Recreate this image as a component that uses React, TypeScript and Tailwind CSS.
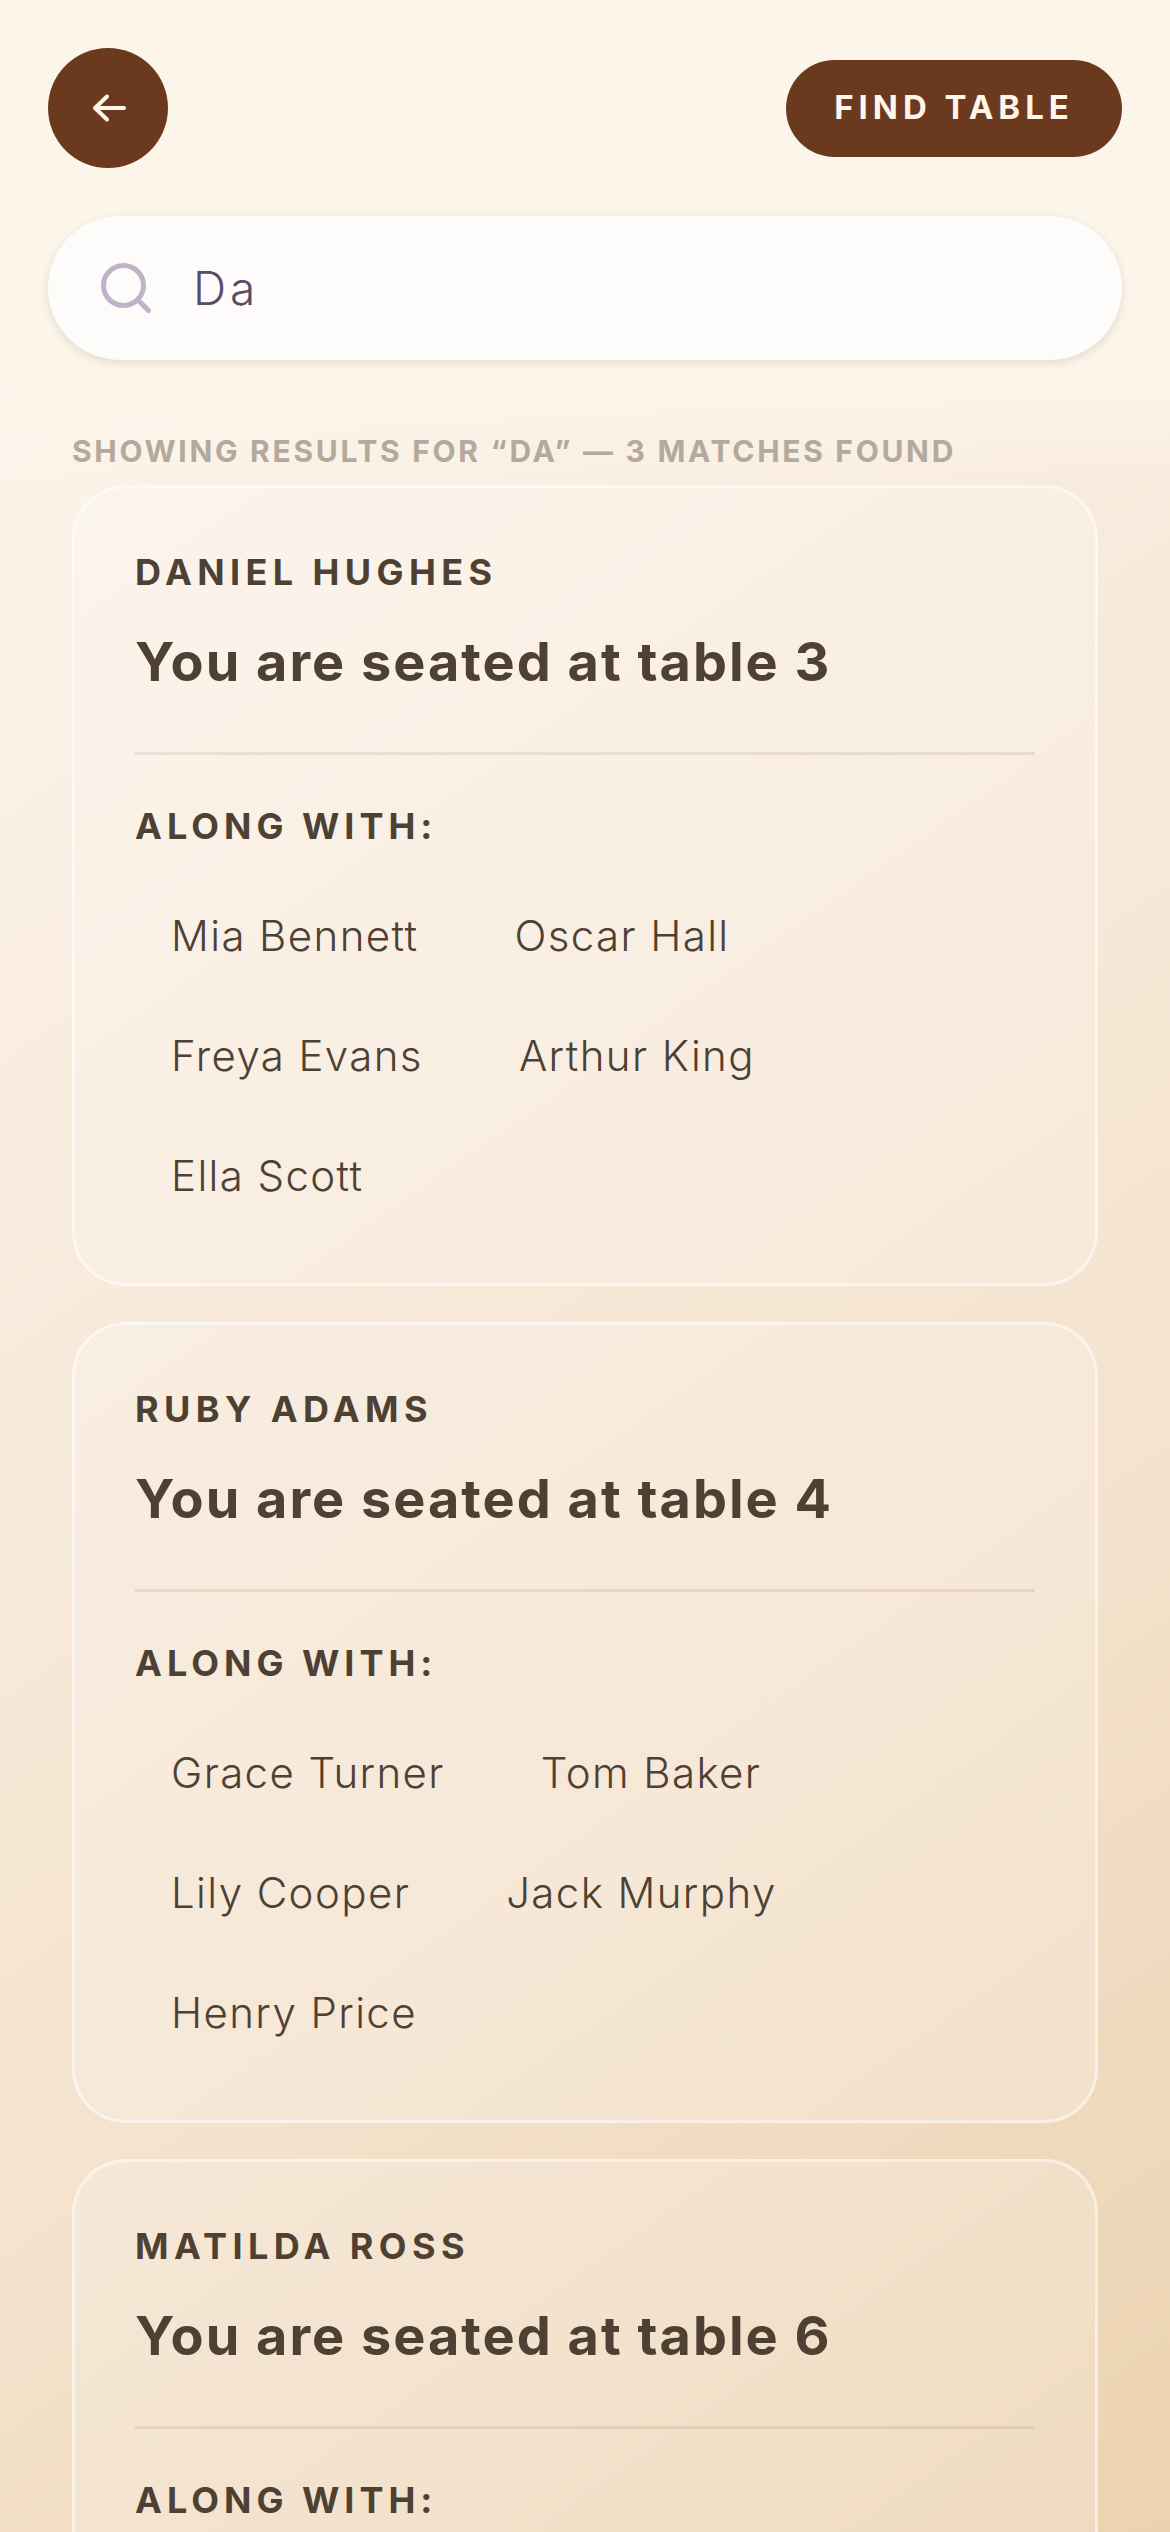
import React from 'react';
import { Search } from 'lucide-react';

interface Seat {
  name: string;
  table: number;
  guests: string[];
}

const seats: Seat[] = [
  { name: 'Daniel Hughes', table: 3, guests: ['Mia Bennett', 'Oscar Hall', 'Freya Evans', 'Arthur King', 'Ella Scott'] },
  { name: 'Ruby Adams', table: 4, guests: ['Grace Turner', 'Tom Baker', 'Lily Cooper', 'Jack Murphy', 'Henry Price'] },
  { name: 'Matilda Ross', table: 6, guests: [] },
];

const SeatCard = ({ seat }: { seat: Seat }) => (
  <div className="shrink-0 rounded-[54px] border-[3px] border-white/50 bg-white/20 px-[60px] py-[60px]">
    <p className="text-[36px] leading-[48px] font-bold uppercase tracking-[5.4px] text-[#4e4133]">{seat.name}</p>
    <h2 className="mt-[33px] text-[54px] leading-[66px] font-bold tracking-[2px] text-[#4e4133]">
      You are seated at table {seat.table}
    </h2>
    <div className="mt-[57px] h-[3px] bg-[#6b3a1e]/10" />
    <p className="mt-[47px] text-[36px] leading-[48px] font-bold uppercase tracking-[5px] text-[#4e4133]">Along with:</p>
    <div className="mt-[37px] flex flex-wrap gap-[24px]">
      {seat.guests.map((guest) => (
        <span key={guest} className="flex h-[96px] items-center px-[36px] text-[42px] font-light tracking-[1.4px] text-[#4e4133]">
          {guest}
        </span>
      ))}
    </div>
  </div>
);

export default function App() {
  return (
    <div className="h-[2532px] w-[1170px] overflow-hidden bg-[linear-gradient(145deg,#fdf8f0_0%,#f8ebdd_38%,#f4e2cd_68%,#ebd2b0_100%)] font-['Inter',sans-serif]">
      {/* Header */}
      <header className="bg-[linear-gradient(180deg,#fcf5ea_0%,#fcf5ea_78%,#fcf5ea00_100%)] px-[48px] pt-[48px] pb-[16px]">
        <div className="flex items-center justify-between">
          <button className="flex h-[120px] w-[120px] items-center justify-center rounded-full bg-[#6b3a1e]">
            <svg width="54" height="54" viewBox="0 0 54 54" fill="none" stroke="#fff5e8" strokeWidth="4" strokeLinecap="round" strokeLinejoin="round">
              <path d="M14.5 27H43" />
              <path d="M26 15.5 14 27l12 11.5" />
            </svg>
          </button>
          <button className="flex h-[97px] w-[336px] items-center justify-center rounded-full bg-[#6b3a1e] text-[33px] font-bold uppercase tracking-[5px] text-[#fff5e8]">
            Find table
          </button>
        </div>
        <div className="mt-[48px] flex h-[144px] items-center gap-[37px] rounded-full bg-[#fefcfa] pl-[48px] shadow-[0_3px_8px_rgba(90,60,30,0.14)]">
          <Search size={60} strokeWidth={2} className="text-[#bdb4c8]" />
          <span className="text-[46px] font-light tracking-[4px] text-[#5a4a6a]">Da</span>
        </div>
        <p className="mt-[73px] px-[24px] text-[30px] leading-[36px] font-bold uppercase tracking-[2.7px] text-[#b3a99c]">
          Showing results for “Da” — 3 matches found
        </p>
      </header>

      {/* Results */}
      <main className="flex flex-col gap-[36px] px-[72px]">
        {seats.map((seat) => (
          <SeatCard key={seat.name} seat={seat} />
        ))}
      </main>
    </div>
  );
}
